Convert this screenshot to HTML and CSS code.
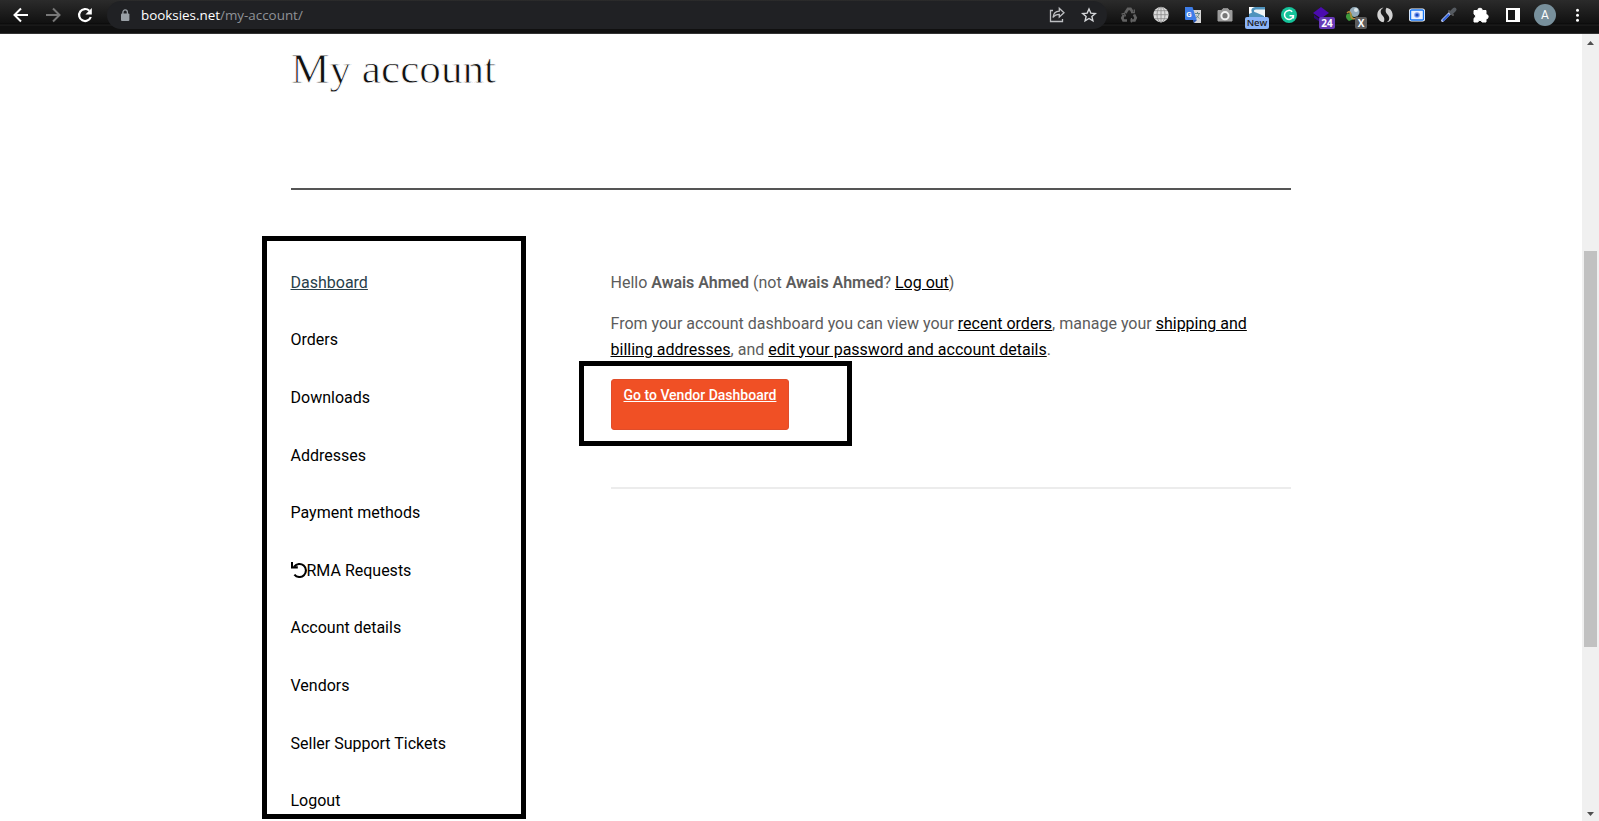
FILE: index.html
```html
<!DOCTYPE html>
<html lang="en">
<head>
    <meta charset="UTF-8">
    <meta name="viewport" content="width=device-width, initial-scale=1.0">
    <title>My account</title>
    <link rel="stylesheet" href="styles.css">
</head>
<body>
    <header class="toolbar">
        <div class="nav-buttons">
            <svg width="32" height="30" viewBox="0 0 32 30" fill="none" stroke="#fff" stroke-width="2"><path d="M23 15H10M16 8.5L9.5 15L16 21.5"/></svg>
            <svg width="32" height="30" viewBox="0 0 32 30" fill="none" stroke="#777" stroke-width="2"><path d="M9 15H22M16 8.5L22.5 15L16 21.5"/></svg>
            <svg width="32" height="30" viewBox="0 0 32 30"><path d="M20.3 10.7A6 6 0 1 0 21.8 17" fill="none" stroke="#fff" stroke-width="2.2"/><path d="M22.8 8v6.4h-6.4z" fill="#fff"/></svg>
        </div>
        <div class="address-bar">
            <svg class="lock" width="10" height="13" viewBox="0 0 10 13"><rect x="1" y="4.5" width="8.4" height="7.5" rx="1" fill="#9aa0a6"/><path d="M2.9 5V3.2a2.2 2.2 0 0 1 4.5 0V5" fill="none" stroke="#9aa0a6" stroke-width="1.3"/></svg>
            <span class="url"><b>booksies.net</b>/my-account/</span>
            <svg width="32" height="28" viewBox="0 0 32 28" fill="none" stroke="#bdbfc2" stroke-width="1.3"><path d="M12 9.5H9.5V20.5H21.5V18"/><path d="M12 16.5C12.5 12 15 10.3 18.3 10.2V7.2L23 11.8L18.3 16V13.3C15.5 13.3 13.5 14.2 12 16.5Z"/></svg>
            <svg width="32" height="28" viewBox="0 0 32 28" fill="none" stroke="#d5d7da" stroke-width="1.4"><path d="M16 8L17.8 12.1L22.3 12.5L18.9 15.4L19.9 19.8L16 17.5L12.1 19.8L13.1 15.4L9.7 12.5L14.2 12.1Z"/></svg>
        </div>
        <div class="extensions">
            <!-- recycle -->
            <svg class="ext" viewBox="0 0 32 30" fill="none" stroke="#626262" stroke-width="2.7"><path d="M12.3 13L15 8.8h2.5l2 3.2M21 14.5l1.7 3.3-1.2 2.7h-4M14 20.5h-3.5L9.3 18l1.5-3"/><path d="M18 12.7h3.3V9.5M18.5 18v4.5M8.5 14.2l3-.8 1 3" stroke-width="1.3"/></svg>
            <!-- globe -->
            <svg class="ext" viewBox="0 0 32 30"><circle cx="16" cy="14.7" r="7.6" fill="#dcdcdc"/><path d="M8.5 14.7h15M16 7v15.4M9.8 10.7h12.4M9.8 18.7h12.4" stroke="#888" stroke-width=".8"/><ellipse cx="16" cy="14.7" rx="4" ry="7.6" fill="none" stroke="#888" stroke-width=".8"/></svg>
            <!-- translate -->
            <svg class="ext" viewBox="0 0 32 30"><path d="M14 10h10v13H17z" fill="#d5d5d5"/><path d="M8 7h7.5l4.3 13H9a1 1 0 0 1-1-1z" fill="#3d7de8"/><path d="M16 20h4l-3 3z" fill="#2453b5"/><path d="M18 13.5h5M20.5 12v1.5M22 14c-.5 2-2 3.3-3 4M19.3 15.5l3 3" stroke="#688" fill="none"/><text x="9.3" y="17" font-size="8" font-weight="700" fill="#fff">G</text></svg>
            <!-- camera -->
            <svg class="ext" viewBox="0 0 32 30"><path d="M9 10.5h3.5L14 8.7h5l1.4 1.8H23V21H9z" fill="#9b9b9b" stroke="#9b9b9b" stroke-linejoin="round"/><circle cx="16" cy="15.7" r="3.6" fill="#777" stroke="#f2f2f2" stroke-width="2"/></svg>
            <div class="ext">
                <svg viewBox="0 0 32 30"><path d="M8 7h16v11H8z" fill="#f0f4f6"/><path d="M8 7h16v2.5h-9c-3 .5-2.5 2.5 0 3L23 16v2H8z" fill="#4f93bd"/><path d="M8 7h6c-4 1-4 3-3 5.5L8 14z" fill="#fff"/></svg>
                <span class="badge badge-new">New</span>
            </div>
            <!-- grammarly -->
            <svg class="ext" viewBox="0 0 32 30"><circle cx="16" cy="15" r="8" fill="#15c39a"/><path d="M19.2 11.7A4.5 4.5 0 1 0 20.4 15.8H16.5M20.4 15v3.5" fill="none" stroke="#fff" stroke-width="1.5"/></svg>
            <div class="ext">
                <svg viewBox="0 0 32 30"><path d="M16 7l8 6-8 5.5L8 13z" fill="#4b0bb0"/><path d="M9 15l7 5 4-2v3l-5 1-6-4z" fill="#2e0778"/></svg>
                <span class="badge badge-count">24</span>
            </div>
            <div class="ext">
                <svg viewBox="0 0 32 30"><circle cx="17.5" cy="12" r="5" fill="#91a9b8"/><circle cx="19" cy="10" r="2" fill="#dce6ea"/><path d="M14 13l-4 1c-2 2-1 5 2 7l5-2z" fill="#3f9a3c"/><path d="M10 13c3-3 4 0 4 3s4 4 7 1" fill="none" stroke="#b98939" stroke-width="1.5"/></svg>
                <span class="badge badge-x">X</span>
            </div>
            <!-- leaf swirl -->
            <svg class="ext" viewBox="0 0 32 30" fill="#d2d2d2"><path d="M14.5 7.8C11 9.500 11 13 13.500 15.500C15.500 17.500 16 20 14.500 22.300C8 21.500 6.500 13 10.500 9.500C11.800 8.300 13 7.800 14.500 7.800Z"/><path d="M17.5 22.200C21 20.500 21 17 18.500 14.500C16.500 12.500 16 10 17.500 7.700C24 8.500 25.500 17 21.500 20.500C20.200 21.700 19 22.200 17.500 22.200Z"/></svg>
            <!-- screenshot eye -->
            <svg class="ext" viewBox="0 0 32 30"><rect x="8" y="8.5" width="16" height="13" rx="2.5" fill="#fff"/><rect x="9.5" y="10" width="13" height="10" rx="1" fill="#e8f1fe" stroke="#1976f3" stroke-width="1.4"/><circle cx="16" cy="15" r="2.8" fill="#7b9af0"/><circle cx="16" cy="15" r="1.6" fill="#174bc0"/></svg>
            <!-- color picker -->
            <svg class="ext" viewBox="0 0 32 30" stroke-linecap="round"><path d="M9.5 20.5L17 13" stroke="#aebde8" stroke-width="3"/><path d="M10.5 20L15.5 15" stroke="#3565df" stroke-width="2"/><path d="M16 11l4 4" stroke="#555" stroke-width="2"/><path d="M18.5 12.5L21.5 9.5" stroke="#555a60" stroke-width="4"/></svg>
            <!-- puzzle -->
            <svg class="ext" viewBox="0 0 32 30"><path d="M9 10.5h3.7a2.3 2.3 0 0 1 4.6 0H21v4a2.2 2.2 0 0 1 0 4.4V22h-4a2.1 2.1 0 0 0-4.1 0H9v-3.7a2.2 2.2 0 0 0 0-4.2z" fill="#fff" stroke="#fff" stroke-linejoin="round"/></svg>
            <!-- side panel -->
            <svg class="ext" viewBox="0 0 32 30"><path d="M9 8h14v14H9z" fill="#fff"/><path d="M11 10h7v10h-7z" fill="#161616"/></svg>
            <div class="ext"><span class="avatar">A</span></div>
            <svg class="ext" viewBox="0 0 32 30" fill="#fff"><circle cx="16.5" cy="10.3" r="1.5"/><circle cx="16.5" cy="15.3" r="1.5"/><circle cx="16.5" cy="20.3" r="1.5"/></svg>
        </div>
    </header>

    <div class="viewport">
        <main class="page">
            <h1>My account</h1>
            <hr class="title-line">
            <div class="account">
                <nav class="account-nav">
                    <ul>
                        <li><a class="active" href="#">Dashboard</a></li>
                        <li><a href="#">Orders</a></li>
                        <li><a href="#">Downloads</a></li>
                        <li><a href="#">Addresses</a></li>
                        <li><a href="#">Payment methods</a></li>
                        <li><a href="#"><svg class="undo" width="16" height="16" viewBox="0 0 16 16"><path d="M3.2 4.6A6.5 6.5 0 1 1 3.4 12.6" fill="none" stroke="#000" stroke-width="2.1"/><path d="M0 0h2v4.3h4.8v2.2H0z"/></svg>RMA Requests</a></li>
                        <li><a href="#">Account details</a></li>
                        <li><a href="#">Vendors</a></li>
                        <li><a href="#">Seller Support Tickets</a></li>
                        <li><a href="#">Logout</a></li>
                    </ul>
                </nav>
                <section class="account-content">
                    <p>Hello <strong>Awais Ahmed</strong> (not <strong>Awais Ahmed</strong>? <a href="#">Log out</a>)</p>
                    <p>From your account dashboard you can view your <a href="#">recent orders</a>, manage your <a href="#">shipping and billing addresses</a>, and <a href="#">edit your password and account details</a>.</p>
                    <div class="vendor-box">
                        <a class="vendor-btn" href="#">Go to Vendor Dashboard</a>
                    </div>
                    <hr class="content-line">
                </section>
            </div>
        </main>
        <div class="scrollbar">
            <svg width="7" height="4" viewBox="0 0 7 4"><path d="M3.5 0L7 4H0z" fill="#505050"/></svg>
            <div class="thumb"></div>
            <svg width="7" height="4" viewBox="0 0 7 4"><path d="M0 0h7L3.5 4z" fill="#505050"/></svg>
        </div>
    </div>
</body>
</html>
```
FILE: styles.css
```css
* {
    box-sizing: border-box;
}

body {
    margin: 0;
    height: 100vh;
    overflow: hidden;
    background-color: #fff;
    color: #5c5c5c;
    font-family: Roboto, sans-serif;
    font-size: 16px;
    font-weight: 400;
    line-height: 25.6px;
}

a {
    color: #000;
}

svg {
    display: block;
    flex-shrink: 0;
}

/* browser toolbar */
.toolbar {
    display: flex;
    align-items: flex-start;
    height: 34px;
    padding: 0 6px 0 5px;
    background: linear-gradient(#2b2b2b 0, #111 23px, #080808 24px, #222 25px, #101010 26px, #101010 33px, #333 33px);
}

.nav-buttons {
    display: flex;
    width: 102px;
}

.address-bar {
    display: flex;
    align-items: center;
    width: 1000px;
    height: 28px;
    margin-top: 1px;
    padding: 0 2px 0 13px;
    border-radius: 14px;
    background-color: #202124;
}

.url {
    flex: 1;
    margin-left: 11px;
    color: #8f9297;
    font-family: "Open Sans", sans-serif;
    font-size: 13.4px;
    font-weight: 400;
    line-height: 28px;
}

.url b {
    color: #fff;
    font-weight: 400;
}

.extensions {
    display: flex;
    margin-left: 6px;
}

.ext {
    position: relative;
    width: 32px;
    height: 30px;
}

.badge {
    position: absolute;
    top: 17px;
    border-radius: 2px;
    font-family: "Open Sans", sans-serif;
    font-size: 10px;
    font-weight: 700;
    line-height: 12px;
    text-align: center;
}

.badge-new {
    left: 4px;
    width: 24px;
    background-color: #8ab4f8;
    color: #202124;
    font-size: 9.5px;
    font-weight: 600;
}

.badge-count {
    left: 14px;
    width: 16px;
    background-color: #673ab7;
    color: #fff;
}

.badge-x {
    left: 18px;
    width: 12px;
    background-color: #5c5c5c;
    color: #fff;
}

.avatar {
    display: block;
    width: 22px;
    height: 22px;
    margin: 4px 0 0 5px;
    border-radius: 50%;
    background-color: #78909c;
    color: #fff;
    font-size: 12px;
    font-weight: 400;
    line-height: 23px;
    text-align: center;
}

/* page */
.viewport {
    display: flex;
    height: calc(100vh - 34px);
}

.page {
    flex: 1;
    padding: 0 291px;
}

h1 {
    margin: 0;
    padding-top: 10px;
    height: 154px;
    color: #111;
    font-family: "Liberation Serif", serif;
    font-size: 43.2px;
    font-weight: 300;
    line-height: 50px;
    -webkit-text-stroke: 0.8px #fff;
}

hr {
    margin: 0;
    border: 0;
    height: 2px;
}

.title-line {
    background-color: #555;
}

.account {
    display: flex;
    justify-content: space-between;
    margin-top: 46px;
}

.account-nav {
    width: 264px;
    height: 583px;
    margin-left: -29px;
    padding: 28.8px 24px 0 23.5px;
    border: 5px solid #000;
}

.account-nav ul {
    display: flex;
    flex-direction: column;
    gap: 32px;
    margin: 0;
    padding: 0;
    list-style: none;
}

.account-nav a {
    display: flex;
    text-decoration: none;
}

.account-nav a.active {
    color: #28404a;
    text-decoration: underline;
}

.undo {
    margin-top: 4px;
}

.account-content {
    width: 680px;
    padding-top: 34px;
}

.account-content p {
    margin: 0 0 15.4px -0.5px;
}

.account-content strong {
    font-weight: 600;
    letter-spacing: -0.05px;
}

.vendor-box {
    width: 273px;
    height: 85px;
    margin: -17px 0 41px -32px;
    padding: 13px 27px;
    border: 5px solid #000;
}

.vendor-btn {
    display: block;
    width: 178px;
    height: 51px;
    padding: 4px 11.5px;
    border: 1px solid #e04d2a;
    border-radius: 3px;
    background-color: #f05025;
    color: #fff;
    font-size: 14px;
    font-weight: 500;
    line-height: 22px;
    white-space: nowrap;
}

.content-line {
    background-color: #ececec;
}

/* scrollbar */
.scrollbar {
    display: flex;
    flex-direction: column;
    align-items: center;
    width: 17px;
    padding: 7px 0 5px;
    background-color: #f0f0f0;
}

.thumb {
    width: 13px;
    height: 396px;
    margin: 206px 0 auto;
    background-color: #c1c1c1;
}
```
